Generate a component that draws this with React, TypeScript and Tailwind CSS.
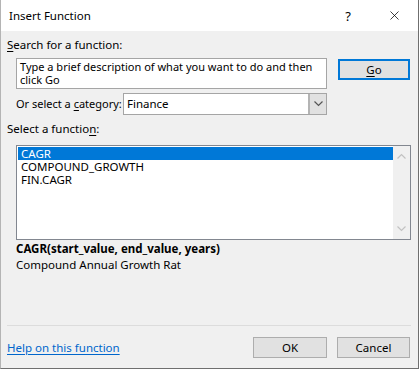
import { X } from "lucide-react";

const font = { fontFamily: '"Noto Sans", "Open Sans", sans-serif' };

function Chevron({ up = false, className = "" }: { up?: boolean; className?: string }) {
  return (
    <svg width="9" height="6" viewBox="0 0 9 6" className={className}>
      <path
        d={up ? "M0.5 5.5 L4.5 1.5 L8.5 5.5" : "M0.5 0.5 L4.5 4.5 L8.5 0.5"}
        fill="none"
        stroke="currentColor"
        strokeWidth="1.2"
      />
    </svg>
  );
}

export default function App() {
  return (
    <div
      style={font}
      className="w-[419px] h-[369px] flex flex-col bg-[#f0f0f0] border-l border-r border-b border-l-[#b4b4b4] border-r-[#6f6f6f] border-b-[#6f6f6f] text-[11.5px] leading-[16px] text-black whitespace-nowrap"
    >
      {/* title bar */}
      <div className="h-[31px] bg-white flex items-center shrink-0">
        <span className="ml-[8px] text-[11.5px]">Insert Function</span>
        <span className="ml-auto mr-[36px] text-[13px]">?</span>
        <X className="mr-[16px] w-[15px] h-[15px]" strokeWidth={1.2} />
      </div>

      <div className="flex flex-col pl-[6px]">
        <div className="mt-[6px] h-[16px]">
          <span className="underline underline-offset-2">S</span>earch for a function:
        </div>

        <div className="flex mt-[5px]">
          <div className="ml-[9px] w-[311px] h-[31px] bg-white border border-[#a5a5a5] pl-[3px] pr-0 pt-[1px] leading-[13px] whitespace-normal text-[11px]">
            Type a brief description of what you want to do and then click Go
          </div>
          <div className="ml-[11px] mt-[1px] w-[72px] h-[21px] border-2 border-[#0078d7] bg-[#e1e1e1] flex items-center justify-center">
            <span>
              <span className="underline underline-offset-2">G</span>o
            </span>
          </div>
        </div>

        <div className="flex items-center mt-[4px] h-[22px]">
          <span className="ml-[9px] w-[107px] shrink-0 text-[11px]">
            Or select a <span className="underline underline-offset-2">c</span>ategory:
          </span>
          <div className="w-[204px] h-[22px] bg-white border border-[#a5a5a5] flex">
            <span className="pl-[3px] pt-[2px] flex-1">Finance</span>
            <div className="w-[18px] h-full bg-[#e1e1e1] border-l-2 border-[#b4b4b4] flex items-center justify-center text-[#555]">
              <Chevron />
            </div>
          </div>
        </div>

        <div className="mt-[6px] h-[16px]">
          Select a functio<span className="underline underline-offset-2">n</span>:
        </div>

        <div className="ml-[9px] mt-[8px] w-[395px] h-[95px] bg-white border border-[#828790] flex">
          <div className="flex-1 pt-[1px] pl-[1px] flex flex-col leading-[13px]">
            <div className="h-[13px] bg-[#0078d7] text-white pl-[3px]">CAGR</div>
            <div className="h-[13px] pl-[3px]">COMPOUND_GROWTH</div>
            <div className="h-[13px] pl-[3px]">FIN.CAGR</div>
          </div>
          <div className="w-[17px] bg-[#f0f0f0] flex flex-col items-center justify-between pt-[7px] pb-[7px] text-[#c2c2c2]">
            <Chevron up />
            <Chevron />
          </div>
        </div>

        <div className="ml-[9px] mt-[1px] font-bold">CAGR(start_value, end_value, years)</div>
        <div className="ml-[9px]">Compound Annual Growth Rat</div>

        <div className="mt-[52px] w-[404px] h-px bg-[#dcdcdc]" />

        <div className="flex items-center mt-[11px] h-[21px]">
          <span className="text-[#0066cc] underline underline-offset-2">Help on this function</span>
          <div className="ml-auto w-[74px] h-[21px] border border-[#adadad] bg-[#e1e1e1] flex items-center justify-center">
            OK
          </div>
          <div className="ml-[10px] mr-[8px] w-[73px] h-[21px] border border-[#adadad] bg-[#e1e1e1] flex items-center justify-center">
            Cancel
          </div>
        </div>
      </div>
    </div>
  );
}
